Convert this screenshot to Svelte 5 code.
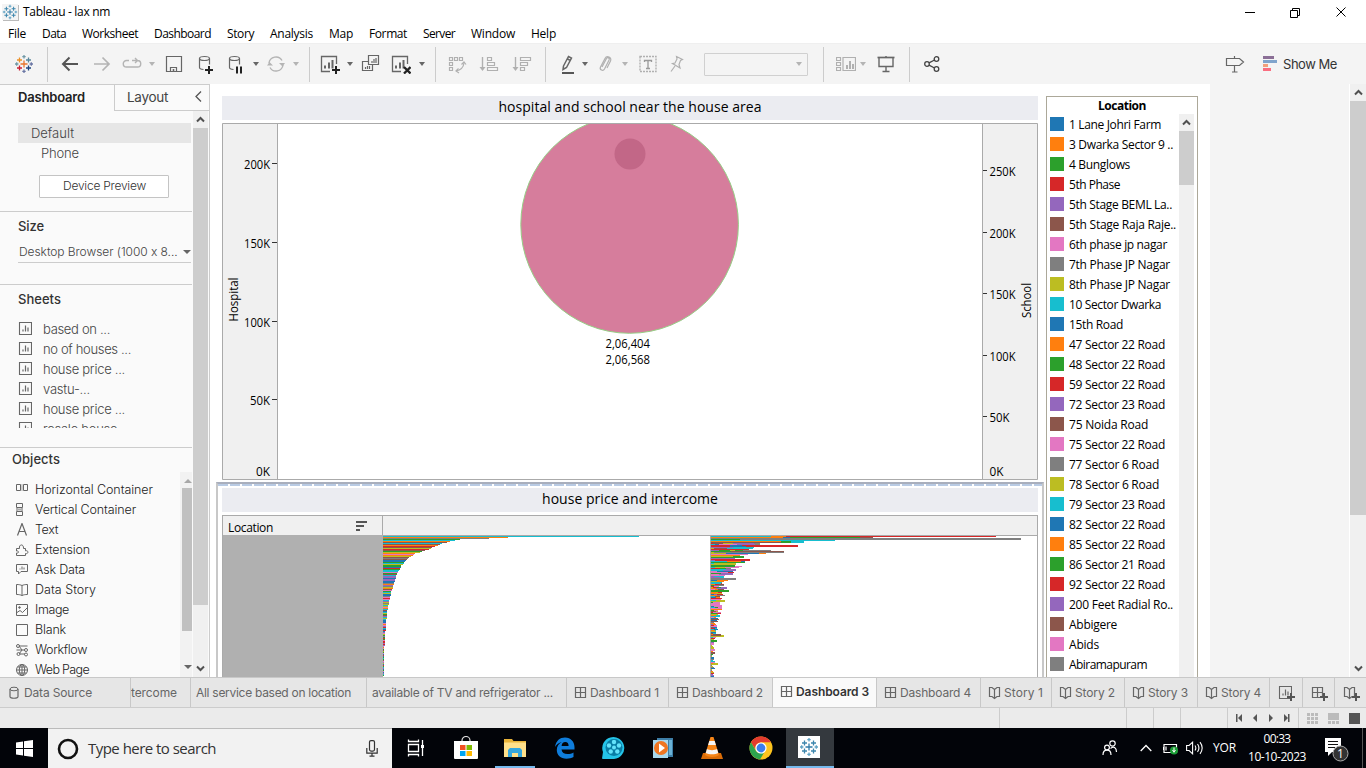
<script>
  // Spreads the letters of a label over a fixed measure.
  function fit(node, width) {
    if (!width) return;
    const natural = node.getBoundingClientRect().width;
    const n = node.textContent.length;
    node.style.letterSpacing = ((width - natural) / n).toFixed(3) + 'px';
    node.style.width = width + 'px';
  }

  const P = { b: '#1f77b4', o: '#ff7f0e', g: '#2ca02c', r: '#d62728', p: '#9467bd', n: '#8c564b', k: '#e377c2', y: '#7f7f7f', l: '#bcbd22', c: '#17becf' };
  const order = 'bogrpnkylc';

  const menu = [['File', 18], ['Data', 24], ['Worksheet', 56], ['Dashboard', 57], ['Story', 27], ['Analysis', 43], ['Map', 24], ['Format', 38], ['Server', 32], ['Window', 44], ['Help', 25]];

  const tools = [
    ['logo', 47], ['|', 1], ['pad', 6], ['back', 32], ['fwd', 32], ['redo', 28], ['caretoff', 12], ['save', 32], ['dbplus', 32], ['dbpause', 28], ['caret', 12],
    ['refresh', 28], ['caretoff', 12], ['|', 14], ['newsheet', 28], ['caret', 12], ['dup', 30], ['clear', 30], ['caret', 12], ['|', 14],
    ['swap', 30], ['asc', 34], ['desc', 32], ['|', 14], ['pad', 6], ['pen', 20], ['caret', 14], ['clip', 26], ['caretoff', 14], ['label', 32], ['pin', 26], ['box', 132],
    ['|', 2], ['pad', 10], ['cards', 24], ['caretoff', 10], ['present', 36], ['|', 10], ['share', 36]
  ];

  const sheets = [['based on ...', 67], ['no of houses ...', 88], ['house price ...', 82], ['vastu-...', 47], ['house price ...', 82], ['resale house ...', 88]];
  const objects = [['hc', 'Horizontal Container', 118], ['vc', 'Vertical Container', 101], ['text', 'Text', 23], ['ext', 'Extension', 55], ['ask', 'Ask Data', 50], ['story', 'Data Story', 61], ['image', 'Image', 34], ['blank', 'Blank', 31], ['flow', 'Workflow', 52], ['web', 'Web Page', 54]];

  const legend = [['1 Lane Johri Farm', 92], ['3 Dwarka Sector 9 ..', 104], ['4 Bunglows', 61], ['5th Phase', 51], ['5th Stage BEML La..', 103], ['5th Stage Raja Raje..', 107], ['6th phase jp nagar', 98], ['7th Phase JP Nagar', 101], ['8th Phase JP Nagar', 101], ['10 Sector Dwarka', 92], ['15th Road', 54], ['47 Sector 22 Road', 96], ['48 Sector 22 Road', 96], ['59 Sector 22 Road', 96], ['72 Sector 23 Road', 96], ['75 Noida Road', 79], ['75 Sector 22 Road', 96], ['77 Sector 6 Road', 90], ['78 Sector 6 Road', 90], ['79 Sector 23 Road', 96], ['82 Sector 22 Road', 96], ['85 Sector 22 Road', 96], ['86 Sector 21 Road', 96], ['92 Sector 22 Road', 96], ['200 Feet Radial Ro..', 104], ['Abbigere', 48], ['Abids', 30], ['Abiramapuram', 78]];

  const leftAxis = [['200K', 41, 26], ['150K', 120, 26], ['100K', 199, 26], ['50K', 277, 20], ['0K', 348, 14]];
  const rightAxis = [['250K', 48, 26], ['200K', 110, 26], ['150K', 171, 26], ['100K', 233, 26], ['50K', 294, 20], ['0K', 348, 14]];

  const head = [['c', 256], ['o', 125], ['y', 106], ['g', 77], ['c', 72], ['o', 67], ['n', 64], ['c', 59], ['n', 57], ['o', 55], ['r', 52], ['n', 49], ['l', 48], ['r', 46], ['n', 42], ['g', 39], ['l', 37], ['o', 32], ['k', 31], ['o', 30], ['l', 28], ['n', 26], ['y', 25], ['n', 24], ['b', 23], ['b', 22], ['g', 21], ['c', 21], ['l', 20], ['g', 18], ['g', 18], ['b', 18], ['r', 17], ['g', 17], ['c', 16], ['c', 15], ['k', 15], ['g', 14], ['n', 14], ['c', 13], ['p', 13], ['p', 13], ['b', 13], ['p', 12], ['p', 12], ['b', 12], ['b', 11], ['y', 11], ['o', 11], ['p', 10], ['y', 10], ['l', 10], ['o', 10], ['n', 9], ['k', 9], ['g', 8], ['c', 8], ['l', 8], ['b', 8], ['b', 8]];
  const tailColors = 'ykrkcplylclkocnbclgnpclcbbbkokprcbrbpklgpgrgkrrprpkokgnlgkbrbgcgnkplbrgcpbgkbpcgbrlgn';
  const leftBars = [...head, ...[...tailColors].map((c, i) => {
    const y = i + 60;
    return [c, y < 64 ? 7 : y < 69 ? 6 : y < 74 ? 5 : y < 83 ? 4 : y < 95 ? 3 : y < 110 ? 2 : 1];
  })].slice(0, 140);

  const rightBars = ('c60o75r285;o72b79g149n162;y310;g29y310;c124;o70g80c93;n70g80c93;r2n12l22p43y49;c4b8k26p44y49;r19b31r87;r19b35r87;p22c43;l3n16c42;r38;' +
    'p8g19l24g32y60;g20n73;l3y73;l15b48o55;k37;o29;l22g33;g33;p24;r39;p4r39;c16o30b34;g34;c3l25;l25;g24;g24k31;c4l14k28;r9g15y20;c15p25;c12p25;k6b22;k17r23;g10p22;k8p22;k14;' +
    'p3c13;p9c13;y25;y25;b6o17;l6o13;c11;c10r11;o4r8n13;g3y13;r3k8;l2r6g10p16;o5p16;k4o7n13;g18;g18;o7r11;o5l11;b3p6r12;o6y14;c4n9;b5o9;r11;k10;c5l14;l14;g2k9;k9;k9;k11;b3k11;c4g7k11;k11;o11;' +
    'g3k7;n5l7;r2k10;g6r10;l7;o5c9;c9;k3o5;b7;n8;b6;n7;y3;o4;p2o5;r3k6;k6;n2b6;r4c6;c3b7;o4c5;l5;b5;n2c5;o2n10;n10l13;l13;c2k5;r4;l3;g6;g6;p3;k3;k3;l1;l2;l3;l3;k4;k4;o2;n4;n4;g2;y1;l1;b3;b3;y3;c2;c4;k4;o2l7;l7;y1;l2;y3;b4;l1;y1;o2;l3;r3;p2;p3;b3;r2;k2').split(';')
    .map((row) => {
      let from = 0;
      return [...row.matchAll(/([a-z])(\d+)/g)].map(([, c, end]) => { const s = { c: P[c], from, w: end - from }; from = +end; return s; });
    }).slice(0, 141);

  const tabs = [['', 'tercome', 46, 60], ['', 'All service based on location', 155, 176], ['', 'available of TV and refrigerator ...', 181, 200], ['dash', 'Dashboard 1', 69, 102], ['dash', 'Dashboard 2', 71, 104], ['dash', 'Dashboard 3', 73, 104], ['dash', 'Dashboard 4', 71, 104], ['book', 'Story 1', 39, 71], ['book', 'Story 2', 40, 73], ['book', 'Story 3', 40, 73], ['book', 'Story 4', 40, 72]];
</script>

{#snippet t(text, w)}<span class="t" use:fit={w}>{text}</span>{/snippet}

{#snippet mark(mono)}
  <g fill="none" stroke-width="1.3">
    <path stroke={mono ? '#2f7ba8' : '#e8762c'} d="M10 6.5v7M6.5 10h7" />
    <path stroke={mono ? '#3c86ad' : '#eb9129'} d="M5.5 3.5v5M3 6h5" />
    <path stroke={mono ? '#3c86ad' : '#59879b'} d="M14.5 3.5v5M12 6h5" />
    <path stroke={mono ? '#3c86ad' : '#c72035'} d="M5.5 11.5v5M3 14h5" />
    <path stroke={mono ? '#3c86ad' : '#1f457e'} d="M14.5 11.5v5M12 14h5" />
    <path stroke={mono ? '#5fa2c4' : '#7199a6'} d="M10 1v3.4M8.3 2.7h3.4M1 10h3.4M2.7 8.3v3.4" />
    <path stroke={mono ? '#5fa2c4' : '#6b77a5'} d="M10 15.6v3.4M8.3 17.3h3.4M15.6 10H19M17.3 8.3v3.4" />
  </g>
{/snippet}

{#snippet tool(name)}
  <svg class="ico" width="20" height="20" viewBox="0 0 20 20" fill="none" stroke="#666" stroke-width="1.2">
    {#if name === 'logo'}{@render mark(false)}
    {:else if name === 'back'}<path stroke-width="2" stroke="#555" d="M3 10h15M9.5 3.5 3 10l6.5 6.5" />
    {:else if name === 'fwd'}<path stroke-width="1.7" stroke="#b4b4b4" d="M2 10h15M10.5 3.5 17 10l-6.5 6.5" />
    {:else if name === 'redo'}<path stroke="#b4b4b4" stroke-width="1.4" d="M7 6.500H4.500a3 3 0 0 0 0 6.500h11a3 3 0 0 0 0-6.500H10M13 4l2.500 2.500L13 9" />
    {:else if name === 'save'}<path d="M2.500 2.500h15v15h-15zM6.500 17v-3.500h6V17" /><path d="M9.500 15v2" stroke-width="1.600" />
    {:else if name === 'dbplus' || name === 'dbpause'}
      <path d="M3.500 4.500v9c0 1.200 1.500 1.900 4 2M13.500 4.500v6" /><ellipse cx="8.500" cy="4.500" rx="5" ry="2" />
      {#if name === 'dbplus'}<path stroke="#222" stroke-width="2" d="M13 12v8M9 16h8" />{:else}<path stroke="#222" stroke-width="2" d="M11 12.500v7M15 12.500v7" />{/if}
    {:else if name === 'refresh'}<path stroke="#b4b4b4" stroke-width="1.400" d="M3 9a7 7 0 0 1 13-2.500M17 11a7 7 0 0 1-13 2.500" /><path fill="#b4b4b4" stroke="none" d="M13 9h6l-2.500 3.500zM1 11.500h6L3.500 8z" />
    {:else if name === 'newsheet' || name === 'clear'}
      <path d="M10 17.500H1.500v-15h15V10" stroke-width="1.300" /><path stroke-width="2" d="M5 14.500v-3M9 14.500v-6M12.500 14.500V6" />
      {#if name === 'newsheet'}<path stroke="#222" stroke-width="2" d="M16 12v8M12 16h8" />{:else}<path stroke="#222" stroke-width="2.300" d="m13 13 6.500 6.500M19.500 13 13 19.500" />{/if}
    {:else if name === 'dup'}<path d="M7.500 1.500h10v9h-10zM7.500 7.500h-6v9h10v-6" /><path d="M11 9V7M13 9V5M15 9V4M4.500 15v-2M6.500 15v-3M8.500 15v-3" />
    {:else if name === 'swap'}<g stroke="#b0b0b0"><path d="M2.500 3.500h3v3h-3zM7.500 3.500h3v3h-3zM12.500 3.500h3v3h-3zM2.500 8.500h3v3h-3zM2.500 13.500h3v3h-3zM17 9c-.5 4.500-3 7-8 8" /><path d="m14.500 10.500 2.500-2.500 2 2.500M11.500 14.500 9 17l3 2" /></g>
    {:else if name === 'asc' || name === 'desc'}<g stroke="#b0b0b0"><path d="M3.500 3v12" stroke-width="1.400" /><path fill="#b0b0b0" stroke="none" d="M.5 13h6l-3 4z" />
      {#if name === 'asc'}<path d="M8.500 3.500h4v3h-4zM8.500 8.500h7v3h-7zM8.500 13.500h10v3h-10z" />{:else}<path d="M8.500 3.500h10v3h-10zM8.500 8.500h7v3h-7zM8.500 13.500h4v3h-4z" />{/if}</g>
    {:else if name === 'pen'}<path stroke-width="1.500" d="m5.500 12 5-9.500 3 1.500-5 9.500L5 15.500zM9.500 5l3 1.500" /><path stroke="#555" stroke-width="2" d="M4 19h12" />
    {:else if name === 'clip'}<path stroke="#b0b0b0" d="m7 13 4.500-8.500c1-1.800 3.600-.4 2.600 1.500L9.500 15c-1.500 2.700-5.300.8-4-2L10 4.500c1.800-3.500 7.200-1.200 5.500 2.500L12 14" />
    {:else if name === 'label'}<path stroke="#b0b0b0" stroke-width="1.400" stroke-dasharray="2 1" d="M2 2.500h16v15H2z" /><path stroke="#999" stroke-width="1.300" d="M6.500 8V6.500h7V8M10 6.500v8M8 14.500h4" />
    {:else if name === 'pin'}<path stroke="#b0b0b0" d="m9.500 2.500 6 3-2 1-1.500 4 1 3.500-7.500-4.500L8 9l2-4zM8 12l-4 5.500" />
    {:else if name === 'cards'}<path stroke="#b0b0b0" d="M.5 3.500h4v3h-4zM.5 8.500h4v3h-4zM.5 13.500h4v3h-4zM7 3.500h12.500v13H7z" /><path stroke="#b0b0b0" stroke-width="2" d="M11 15v-4M14 15V7M17 15v-5" />
    {:else if name === 'present'}<path stroke-width="1.700" d="M1.500 3.500h17" /><path stroke-width="1.400" d="M3 4v8.500h14V4M10 2v2M10 13v4M6.500 17.500h7" />
    {:else if name === 'share'}<g stroke="#444" stroke-width="1.300"><circle cx="5" cy="10" r="2.300" /><circle cx="14.500" cy="5" r="2.300" /><circle cx="14.500" cy="15" r="2.300" /><path d="m7 8.900 5.500-2.900M7 11.100l5.500 2.900" /></g>
    {:else if name === 'sign'}<path d="M1.500 4.500h13l4 3.500-4 3.500h-13zM9.500 2v2.500M9.500 12v6M7 18h5.500" />
    {/if}
  </svg>
{/snippet}

{#snippet chev(dir)}<svg class="chev" width="9" height="7" viewBox="0 0 9 7"><path fill="none" stroke="#505050" stroke-width="2" d={dir === 'up' ? 'M1 5.500 4.500 2 8 5.500' : 'M1 1.500 4.500 5 8 1.500'} /></svg>{/snippet}

{#snippet glyph(name)}
  <svg class="glyph" width="14" height="14" viewBox="0 0 14 14" fill="none" stroke="#666">
    {#if name === 'sheet'}<path d="M1.500.5h12v12h-12z" stroke-width="1.100" /><path d="M5 9.500v-2M7.500 9.500v-6M10 9.500v-4" stroke-width="1.200" />
    {:else if name === 'hc'}<path d="M1.500 1.500h4v6h-4zM8.500 1.500h4v6h-4z" /><path d="M6 2h2M6 7h2" stroke="#aaa" /><path d="M6 3h2v3H6z" fill="#ccc" stroke="none" />
    {:else if name === 'vc'}<path d="M1.500.5h6v4h-6zM1.500 8.500h6v4h-6zM2 5v3M7 5v3" /><path d="M3 5.500h3v2H3z" fill="#aaa" stroke="none" />
    {:else if name === 'text'}<path stroke-width="1.200" d="m2.500 12.500 4.500-12 4.500 12M4 8.500h6" />
    {:else if name === 'ext'}<path d="M1.500 5.500h3c-1-4.500 4.500-5 4 0h2v2.300c3.200-1 3.200 3.700 0 2.700v2h-9V10c2.700.5 2.700-2.500 0-2z" />
    {:else if name === 'ask'}<path d="M1.500 1.500h11v7H6L3.500 11V8.500h-2z" /><path d="M5 6.500v-1M7 6.500v-3M9 6.500v-2" />
    {:else if name === 'story'}<path d="M1.500 1.500c2.500 0 4 .3 5.500 1 1.500-.7 3-1 5.500-1v10c-2.500 0-4 .3-5.500 1-1.500-.7-3-1-5.500-1zM7 2.500v10" />
    {:else if name === 'image'}<path d="M1.500 1.500h11v11h-11zM2 9.500l3-2 2.500 2L12 5" /><circle cx="4.500" cy="4.500" r=".8" fill="#666" />
    {:else if name === 'blank'}<path d="M1.500 1.500h11v11h-11z" />
    {:else if name === 'flow'}<path d="M4 3h8.500M1.500 7H10M5 11h5M4 3l3 4-3 4" /><circle cx="3" cy="3" r="1.500" /><circle cx="11" cy="7" r="1.500" /><circle cx="3.500" cy="11" r="1.500" /><circle cx="11" cy="11.500" r="1.500" />
    {:else if name === 'web'}<circle cx="7" cy="7" r="5.500" /><path d="M1.500 7h11M7 1.500v11M2.500 4h9M2.500 10h9" /><ellipse cx="7" cy="7" rx="2.700" ry="5.500" />
    {:else if name === 'dash'}<path d="M1.500 1.500h10v10h-10zM6.500 1.500v10M1.500 6.500h10" stroke-width="1.200" />
    {:else if name === 'book'}<path d="M1.500 1.500h2.500L6.500 3.500 9 1.500h2.500v9H9L6.500 12.500 4 10.500H1.500zM6.500 3.500v9" stroke-width="1.200" />
    {:else if name === 'source'}<ellipse cx="6" cy="3" rx="4" ry="1.800" /><path d="M2 3v7.500c0 2.300 8 2.300 8 0V3" stroke-width="1.200" />
    {/if}
  </svg>
{/snippet}

<div class="app">
  <header class="title">
    <svg class="badge" width="16" height="16" viewBox="0 0 20 20">{@render mark(true)}</svg>
    {@render t('Tableau - lax nm', 87)}
    <svg class="win" width="110" height="14" viewBox="0 0 110 14" fill="none" stroke="#000">
      <path d="M0 7.500h10M45.500 5.500h7v7h-7zM47.500 5V3.500h7v7H53M91.500 2.500l9 9M100.500 2.500l-9 9" />
    </svg>
  </header>
  <nav class="menu">{#each menu as [m, w]}{@render t(m, w)}{/each}</nav>

  <div class="toolbar">
    {#each tools as [name, w]}
      <div class="slot" style:width="{w}px">
        {#if name === '|'}<i class="rule"></i>
        {:else if name === 'box'}<div class="combo"><i class="tri off"></i></div>
        {:else if name === 'caret'}<i class="tri"></i>
        {:else if name === 'caretoff'}<i class="tri off"></i>
        {:else if name !== 'pad'}{@render tool(name)}{/if}
      </div>
    {/each}
    <div class="showme">
      {@render tool('sign')}
      <svg width="15" height="16" viewBox="0 0 15 16"><path fill="#8b6f96" d="M0 0h11v3H0z" /><path fill="#80a4cc" d="M0 4h14v3H0z" /><path fill="#f2a07c" d="M0 8h5v3H0z" /><path fill="#fa6e80" d="M0 12h8v3H0z" /></svg>
      {@render t('Show Me', 54)}
    </div>
  </div>

  <main>
    <aside>
      <div class="sidetabs">
        <b>{@render t('Dashboard', 67)}</b>
        <div class="layout">{@render t('Layout', 41)}<svg width="7" height="11" viewBox="0 0 7 11"><path d="M6 .5 1 5.500l5 5" fill="none" stroke="#555" stroke-width="1.300" /></svg></div>
      </div>
      <div class="sidebody">
        <div class="panes">
          <section class="device">
            <div class="default">{@render t('Default', 43)}</div>
            <div class="phone">{@render t('Phone', 38)}</div>
            <button>{@render t('Device Preview', 83)}</button>
          </section>
          <section class="size">
            <h3>{@render t('Size', 26)}</h3>
            <div class="select">{@render t('Desktop Browser (1000 x 8...', 160)}<i class="tri"></i></div>
          </section>
          <section class="sheets">
            <h3>{@render t('Sheets', 43)}</h3>
            <div class="list">
              {#each sheets as [s, w]}<div class="row">{@render glyph('sheet')}{@render t(s, w)}</div>{/each}
            </div>
          </section>
          <section class="objects">
            <h3>{@render t('Objects', 48)}</h3>
            <div class="objwrap">
              <div class="objlist">{#each objects as [g, s, w]}<div class="row">{@render glyph(g)}{@render t(s, w)}</div>{/each}</div>
              <div class="minibar"><i class="tri up"></i><div></div><i class="tri"></i></div>
            </div>
          </section>
        </div>
        <div class="bar"><span>{@render chev('up')}</span><div class="thumb"></div><span class="end">{@render chev('down')}</span></div>
      </div>
    </aside>

    <div class="canvas">
      <div class="left">
        <h2>{@render t('hospital and school near the house area', 263)}</h2>
        <svg class="bubble" width="816" height="357" viewBox="0 0 816 357">
          <path fill="#f0f0f0" d="M0 0h55v357H0zM760 0h56v357h-56z" />
          <circle cx="407.600" cy="101.500" r="108.800" fill="#d67d9c" stroke="#96cf86" />
          <circle cx="408" cy="31" r="15.500" fill="#c26787" />
          <path fill="none" stroke="#aaa" d="M.5.5h815v356H.5zM55.500 0v357M760.500 0v357" />
          {#each leftAxis as [l, y, w], i}
            <text x="48" y={y + 5} text-anchor="end" textLength={w} lengthAdjust="spacingAndGlyphs">{l}</text>
            {#if i < 4}<path stroke="#333" d="M50 {y - 0.5}h5" />{/if}
          {/each}
          {#each rightAxis as [l, y, w], i}
            <text x="767.500" y={y + 5} textLength={w} lengthAdjust="spacingAndGlyphs">{l}</text>
            {#if i < 5}<path stroke="#333" d="M761 {y - 0.5}h4" />{/if}
          {/each}
          <text transform="translate(16 198.500) rotate(-90)" textLength="44" lengthAdjust="spacingAndGlyphs">Hospital</text>
          <text transform="translate(809 195) rotate(-90)" textLength="35" lengthAdjust="spacingAndGlyphs">School</text>
          <text x="383.500" y="225" textLength="44.500" lengthAdjust="spacingAndGlyphs">2,06,404</text>
          <text x="383.500" y="241" textLength="44.500" lengthAdjust="spacingAndGlyphs">2,06,568</text>
        </svg>
        <div class="selected">
          <h2>{@render t('house price and intercome', 176)}</h2>
          <div class="table">
            <div class="thead">
              <div>{@render t('Location', 45)}<svg width="12" height="10" viewBox="0 0 12 10"><path fill="#555" d="M0 0h11v2H0zM0 4h8v2H0zM0 8h4v2H0z" /></svg></div>
            </div>
            <div class="tbody">
              <div class="grey"></div>
              <svg width="327" height="141" viewBox="0 0 327 141" shape-rendering="crispEdges">
                {#each leftBars as [c, w], y}<rect x="0" {y} width={w} height="1" fill={P[c]} />{/each}
              </svg>
              <svg class="second" width="327" height="141" viewBox="0 0 326 141" shape-rendering="crispEdges">
                {#each rightBars as row, y}{#each row as s}<rect x={s.from} {y} width={s.w} height="1" fill={s.c} />{/each}{/each}
              </svg>
            </div>
          </div>
        </div>
      </div>
      <div class="legend">
        <h4>{@render t('Location', 48)}</h4>
        <div class="legbody">
          <div class="entries">
            {#each legend as [name, w], i}<div class="entry"><i style:background={P[order[i % 10]]}></i>{@render t(name, w)}</div>{/each}
          </div>
          <div class="bar"><span>{@render chev('up')}</span><div class="thumb"></div></div>
        </div>
      </div>
    </div>
    <div class="bar page"><span>{@render chev('up')}</span><div class="thumb"></div><span class="end">{@render chev('down')}</span></div>
  </main>

  <div class="tabs">
    <div class="tab source">{@render glyph('source')}{@render t('Data Source', 68)}</div>
    {#each tabs as [g, name, w, cell], i}
      <div class="tab" class:active={i === 5} class:cut={i === 0} class:icon={g} style:width="{cell}px">{#if g}{@render glyph(g)}{/if}{@render t(name, w)}</div>
    {/each}
    {#each ['sheet', 'dash', 'book'] as g}
      <div class="tab add">{@render glyph(g)}<svg class="plus" width="8" height="8" viewBox="0 0 8 8"><path d="M4 0v8M0 4h8" stroke="#555" stroke-width="2" /></svg></div>
    {/each}
  </div>
  <div class="status">
    <i></i><i></i><i></i><i></i>
    <div class="steps"><svg width="54" height="8" viewBox="0 0 54 8" fill="#555"><path d="M0 0h1.500v8H0zM6 0v8L2 4zM21 0v8l-4-4zM33 0v8l4-4zM48 0v8l4-4zM52 0h1.500v8H52z" /></svg></div>
    <svg class="views" width="54" height="11" viewBox="0 0 54 11"><g fill="#bbb"><path d="M0 0h3v3H0zM4 0h3v3H4zM8 0h3v3H8zM0 4h3v3H0zM4 4h3v3H4zM8 4h3v3H8zM0 8h3v3H0zM4 8h3v3H4zM8 8h3v3H8zM21 0h11v7H21zM21 8h3v3h-3zM25 8h3v3h-3zM29 8h3v3h-3z" /></g><path fill="#555" d="M42 0h11v11H42z" /></svg>
  </div>

  <footer>
    <div class="start"><svg width="17" height="17" viewBox="0 0 17 17" fill="#fff"><path d="M0 2.400 7 1.400V8H0zM8 1.200 17 0v8H8zM0 9h7v6.600l-7-1zM8 9h9v8l-9-1.200z" /></svg></div>
    <div class="search">
      <svg width="22" height="22" viewBox="0 0 22 22"><circle cx="11" cy="11" r="9" fill="none" stroke="#111" stroke-width="2.600" /></svg>
      {@render t('Type here to search', 128)}
      <svg width="12" height="17" viewBox="0 0 12 17" fill="none" stroke="#333" stroke-width="1.200"><rect x="3.500" y=".6" width="5" height="10.500" rx="1.500" /><path d="M.8 8v5.200h10.400V8M6 13v3.500M3.500 16.200h5" /></svg>
    </div>
    <div class="task"><svg width="24" height="24" viewBox="0 0 24 24" fill="none" stroke="#fff" stroke-width="1.300"><path d="M3.500 8.500h10v7h-10zM3.500 3.500v2h10v-2M3.500 20.500v-2h10v2M17.500 4v16" /><path d="M16 9h3v3h-3z" fill="#fff" stroke="none" /></svg></div>
    <div class="task"><svg width="24" height="24" viewBox="0 0 24 24"><path d="M8 7V4.500a4 4 0 0 1 8 0V7" fill="none" stroke="#ddd" stroke-width="1.200" /><path fill="#fff" d="M0 5h24v17a1 1 0 0 1-1 1H1a1 1 0 0 1-1-1z" /><path fill="#f25022" d="M6 9h5.500v5H6z" /><path fill="#7fba00" d="M12.500 9H18v5h-5.500z" /><path fill="#00a4ef" d="M6 15h5.500v5H6z" /><path fill="#ffb900" d="M12.500 15H18v5h-5.500z" /></svg></div>
    <div class="task open"><svg width="24" height="24" viewBox="0 0 24 24"><path fill="#e8b339" d="M1 3h8l1.500 2H23v16H1z" /><path fill="#ffe08a" d="M1 6.500h22V21H1z" /><path fill="#35a7de" d="M5 21v-7l2-2h10l2 2v7h-4v-4H9v4z" /></svg></div>
    <div class="task"><svg width="24" height="24" viewBox="0 0 24 24"><path fill="#0f7ddb" d="M2 11C3 4.500 7 1.500 12 1.500c6 0 9.500 4.500 9.500 9.500v2.500H8.500c.3 3 2.800 4.500 6 4.500 2.400 0 4.300-.6 6-1.600V21c-2 1.200-4.300 1.700-7 1.700C7.500 22.700 3.800 19 3.800 14c0-3.500 1.800-6.300 5-8C6 6.600 3.500 8.500 2 11zm6.600-1h7c0-2.500-1.100-4-3.300-4s-3.500 1.600-3.700 4z" /></svg></div>
    <div class="task"><svg width="26" height="24" viewBox="0 0 26 24"><path fill="#24c4e8" d="M1 22.500 2 16A11 11 0 1 1 13 23H2z" /><circle cx="13" cy="11.500" r="8.500" fill="#087da5" /><g fill="#63e2fa"><circle cx="13" cy="11.500" r="2" /><circle cx="13" cy="6" r="2.200" /><circle cx="18" cy="9.500" r="2.200" /><circle cx="16.300" cy="15.500" r="2.200" /><circle cx="9.700" cy="15.500" r="2.200" /><circle cx="8" cy="9.500" r="2.200" /></g></svg></div>
    <div class="task"><svg width="22" height="22" viewBox="0 0 22 22"><path fill="#3e7fa8" d="M5 1h16v19H5z" /><path fill="#a9d9ee" d="M1 3h15v18H1z" /><path fill="#6bb2d6" d="M17 3h3v15h-3z" /><circle cx="9" cy="11" r="7" fill="#ef7622" /><path fill="#fff" d="M7 6.500 13 11l-6 4.500z" /></svg></div>
    <div class="task"><svg width="22" height="24" viewBox="0 0 22 24"><path fill="#d96c08" d="M2 17h18l2 6H0z" /><path fill="#f58518" d="M9.500 1h3L18 19c-3 2.500-11 2.500-14 0z" /><path fill="#f5f5f5" d="m8.300 5-1.200 4h7.800l-1.200-4zM6 13l-1.300 4c3 1.800 9.600 1.800 12.600 0L16 13c-2.500 1.500-7.500 1.500-10 0z" /></svg></div>
    <div class="task"><svg width="24" height="24" viewBox="0 0 24 24"><circle cx="12" cy="12" r="11.500" fill="#fcc31e" /><path fill="#e33b2e" d="M2 6.300A11.500 11.500 0 0 1 22 6.300H12a5.700 5.700 0 0 0-5.300 7.700z" /><path fill="#2da44e" d="M2 6.300A11.500 11.500 0 0 0 11 23.500l5-8.500a5.700 5.700 0 0 1-9 0z" /><circle cx="12" cy="12" r="5.600" fill="#fff" /><circle cx="12" cy="12" r="4.400" fill="#3b7ded" /></svg></div>
    <div class="task current"><svg width="22" height="22" viewBox="-1 -1 22 22"><path fill="#fff" d="M-1-1h22v22H-1z" />{@render mark(true)}</svg></div>
    <div class="tray">
      <svg width="16" height="16" viewBox="0 0 16 16" fill="none" stroke="#fff" stroke-width="1.200"><circle cx="10.500" cy="3.500" r="2.700" /><circle cx="5" cy="7.500" r="2.400" /><path d="M1 15c0-6.500 8-6.500 8 0M8.500 8.500c3-3 6-1 6 3.500" /></svg>
      <svg width="12" height="8" viewBox="0 0 12 8"><path d="m.7 7 5.300-5.500L11.300 7" fill="none" stroke="#fff" stroke-width="1.300" /></svg>
      <svg width="15" height="13" viewBox="0 0 15 13"><path d="M1 2.500h12.500v8H1zM3 4.500v4M0 5v3" fill="none" stroke="#fff" stroke-width="1.200" /><circle cx="11" cy="8.500" r="4" fill="#1a9d35" /><path d="M11 5.500v5M9.500 8l1.500 2 1.500-2" stroke="#fff" fill="none" /></svg>
      <svg width="17" height="14" viewBox="0 0 17 14" fill="none" stroke="#fff" stroke-width="1.100"><path d="M.6 4.500h2.500l3.500-3.300v11.600L3.100 9.500H.6zM9 4.500c1 1.500 1 3.500 0 5M11.500 3c1.800 2.500 1.800 5.500 0 8M14 1.200c2.700 3.600 2.700 8 0 11.600" /></svg>
      {@render t('YOR', 23)}
      <div class="clock">{@render t('00:33', 27)}{@render t('10-10-2023', 58)}</div>
      <svg width="26" height="26" viewBox="0 0 26 26"><path fill="#fff" d="M1 1h16v14H8l-4 4v-4H1z" /><path stroke="#111" d="M4 4.500h10M4 7.500h10M4 10.500h7" /><circle cx="16.500" cy="16.500" r="7.500" fill="#333" stroke="#aaa" /><text x="13" y="21" fill="#fff" font-size="12">1</text></svg>
      <i></i>
    </div>
  </footer>
</div>

<style>
  :global(body) { background: #fff; overflow: hidden; }
  .app { width: 1366px; height: 768px; display: flex; flex-direction: column; overflow: hidden; font: 12px/16px "Open Sans", "Noto Sans", sans-serif; color: #000; }
  .app * { box-sizing: border-box; }
  svg { display: block; flex: none; }
  svg text { font-family: "Open Sans", sans-serif; }
  h2, h3, h4 { margin: 0; font-weight: 400; }
  .t { display: inline-block; white-space: nowrap; flex: none; }
  .tri { width: 0; height: 0; border: 3px solid transparent; border-top: 4px solid #666; border-bottom: 0; flex: none; }
  .tri.off { border-top-color: #b4b4b4; }
  .tri.up { border: 4px solid transparent; border-bottom-color: #a8a8a8; border-top: 0; }

  .title { height: 24px; display: flex; align-items: center; gap: 5px; padding: 0 20px 1px 2px; flex: none; }
  .badge { background: #f4f4f4; box-shadow: 1px 1px #bbb; }
  .win { margin-left: auto; margin-right: -9px; }
  .menu { height: 19px; display: flex; gap: 16px; padding: 2px 8px 0; flex: none; }
  .toolbar { height: 41px; flex: none; display: flex; background: #f4f4f4; border-top: 1px solid #efefef; }
  .slot { height: 40px; display: flex; justify-content: center; align-items: center; flex: none; }
  .rule { width: 1px; height: 35px; background: #ccc; }
  .combo { width: 104px; height: 23px; border: 1px solid #d0d0d0; border-radius: 1px; display: flex; align-items: center; justify-content: flex-end; padding-right: 5px; }
  .showme { margin-left: auto; display: flex; align-items: center; padding-right: 29px; font: 13px "Inter", sans-serif; color: #333; }
  .showme .t { margin-top: -1px; }
  .showme svg:nth-child(2) { margin: 0 5px 0 18px; }

  main { height: 593px; flex: none; display: flex; }
  aside { width: 210px; flex: none; display: flex; flex-direction: column; background: #fafafa; border-top: 1px solid #ccc; border-right: 1px solid #ccc; font-family: "Inter", sans-serif; color: #444; }
  .sidetabs { display: flex; height: 26px; flex: none; font-size: 13px; }
  .sidetabs b { width: 114px; padding: 4px 0 0 18px; font-weight: 600; color: #222; }
  .layout { flex: 1; display: flex; padding: 4px 7px 0 12px; justify-content: space-between; border-left: 1px solid #ccc; border-bottom: 1px solid #ccc; font-size: 13.500px; }
  .layout svg { margin-top: 2px; }
  .sidebody { flex: 1; display: flex; min-height: 0; }
  .panes { width: 192px; margin-right: 1px; display: flex; flex-direction: column; }
  .panes section { border-bottom: 1px solid #ccc; flex: none; }
  .device { height: 101px; padding: 12px 1px 0 18px; font-size: 13px; color: #444; font-weight: 300; }
  .default { height: 20px; background: #e6e6e6; padding: 2px 0 0 13px; }
  .phone { height: 20px; padding: 2px 0 0 23px; }
  button { display: block; width: 130px; height: 23px; margin: 12px 0 0 21px; border: 1px solid #c4c4c4; border-radius: 1px; background: #fff; padding: 0 0 1px 1px; font: 300 12px/16px "Inter", sans-serif; color: #333; }
  h3 { font-size: 13px; font-weight: 500; color: #333; }
  .size { height: 73px; padding: 6px 1px 0 18px; }
  .select { display: flex; justify-content: space-between; align-items: center; height: 21px; margin-top: 8px; padding-bottom: 1px; border-bottom: 1px solid #ccc; font-size: 12px; padding-left: 1px; color: #444; font-weight: 300; }
  .select .tri { border-width: 4px 4px 0; margin-left: -4px; }
  .sheets { height: 163px; padding: 6px 0 0 18px; }
  .list { height: 109px; margin-top: 12px; overflow: hidden; }
  .row { display: flex; height: 20px; align-items: center; }
  .sheets .row { gap: 11px; font-size: 13px; color: #444; font-weight: 300; }
  .panes .objects { flex: 1; min-height: 0; border: 0; padding: 3px 0 0 12px; }
  .objwrap { display: flex; height: 206px; margin-top: 5px; }
  .objlist { flex: 1; padding: 8px 0 0 3px; overflow: hidden; }
  .objlist .row { gap: 6px; font-size: 12.500px; color: #222; font-weight: 300; }
  .minibar { width: 12px; background: #f2f2f2; display: flex; flex-direction: column; align-items: flex-end; padding-top: 7px; }
  .minibar div { width: 10px; height: 143px; margin: 5px 0 34px; background: #c0c0c0; }
  .minibar .tri:last-child { border-left-width: 4px; border-right-width: 4px; }
  .bar { width: 15px; background: #f0f0f0; display: flex; flex-direction: column; flex: none; }
  .bar span { height: 17px; display: flex; align-items: center; justify-content: center; }
  .bar .end { margin-top: auto; }
  .thumb { background: #cdcdcd; height: 477px; }

  .canvas { width: 1139px; background: linear-gradient(90deg, #fff 1000px, #f4f4f4 1000px); display: flex; padding: 12px 0 0 6px; }
  .left { width: 828px; display: flex; flex-direction: column; }
  h2 { height: 24px; margin: 0 6px; background: #ebecf1; text-align: center; font-size: 14px; line-height: 22px; }
  .bubble { margin: 3px 6px 2px; font-size: 12px; }
  .selected { height: 195px; border: 2px solid #c8c8c8; border-top-color: #a9afbd; border-bottom: 0; padding-top: 0; display: flex; flex-direction: column; }
  .selected::before { content: ''; height: 2px; flex: none; background: repeating-linear-gradient(90deg, #b9cbe4 0 10px, #fff 10px 12px); }
  .selected h2 { margin: 2px 4px 0; flex: none; }
  .table { margin: 3px 4px 0; border: 1px solid #aaa; border-bottom: 0; }
  .thead { height: 20px; background: #f0f0f0; border-bottom: 1px solid #aaa; }
  .thead div { width: 160px; height: 20px; border-right: 1px solid #aaa; display: flex; justify-content: space-between; padding: 4px 14px 0 5px; }
  .thead svg { margin-top: 1px; }
  .tbody { display: flex; }
  .grey { width: 160px; height: 142px; margin-top: -1px; background: #b0b0b0; flex: none; }
  .second { border-left: 1px solid #aaa; }

  .legend { width: 152px; margin-left: 2px; border: 1px solid #aca899; border-bottom: 0; display: flex; flex-direction: column; }
  h4 { height: 17px; text-align: center; font-size: 12px; font-weight: 700; line-height: 18px; }
  .legbody { display: flex; justify-content: space-between; height: 563px; padding-right: 3px; overflow: hidden; }
  .entries { padding: 1px 0 0 3px; }
  .entry { height: 20px; display: flex; align-items: center; gap: 5px; }
  .entry i { width: 14px; height: 14px; margin-top: -2px; }
  .legend .thumb { height: 54px; }
  .page { width: 16px; margin-left: 1px; }
  .page .thumb { height: 414px; }

  .tabs { height: 31px; flex: none; display: flex; border-top: 1px solid #c8c8c8; border-bottom: 1px solid #ccc; background: #e6e6e6; font: 12px/16px "Inter", sans-serif; color: #666; }
  .tab { display: flex; align-items: center; gap: 5px; padding-left: 5px; border-right: 1px solid #c8c8c8; flex: none; overflow: hidden; }
  .tab.icon { padding-left: 7px; gap: 2px; }
  .tab.source { width: 131px; padding-left: 8px; gap: 2px; }
  .tab.cut { padding: 0; }
  .tab.active { background: #fafafa; color: #333; font-weight: 600; padding-bottom: 2px; }
  .tab.add { width: 32.500px; gap: 0; padding-left: 8px; }
  .plus { margin: 9px 0 0 -5px; }
  .status { height: 20px; flex: none; background: #ebebeb; display: flex; align-items: center; padding-left: 999px; }
  .status i { width: 27px; height: 20px; border-left: 1px solid #ccc; }
  .status i:first-child { width: 127px; }
  .status i:nth-child(4) { width: 47px; }
  .steps { width: 72px; height: 20px; border: solid #ccc; border-width: 0 1px; padding: 6px 0 0 8px; }
  .views { margin-left: 8px; }

  footer { height: 40px; flex: none; display: flex; background: #020409; color: #fff; }
  .start { width: 48px; display: grid; place-items: center; }
  .search { width: 344px; background: #f2f2f2; border-top: 1px solid #bbb; display: flex; align-items: center; padding: 0 14px 0 9px; gap: 9px; color: #333; font-size: 15px; }
  .search .t { margin-top: -2px; }
  .search svg:last-child { margin-left: auto; }
  .task { width: 49.200px; display: grid; place-items: center; flex: none; }
  .task svg { margin-left: 1px; }
  .open { background: linear-gradient(#76b9ed, #76b9ed) 5px 38px / 40px 2px no-repeat; }
  .current { width: 48px; background: #34393e; border-bottom: 2px solid #76b9ed; }
  .current svg { margin: 0 2px 0 0; }
  .tray { margin-left: auto; display: flex; align-items: center; font-size: 12px; }
  .tray .t { margin-top: -1px; }
  .tray svg:nth-child(2) { margin: 0 11px 0 22px; }
  .tray svg:nth-child(4) { margin: 0 10px 0 8px; }
  .clock { width: 82px; display: flex; flex-direction: column; align-items: center; line-height: 19px; }
  .tray svg:nth-child(7) { margin: 4px 12px 0 6px; }
  .tray i { height: 40px; width: 4px; border-left: 1px solid #555; }
</style>
